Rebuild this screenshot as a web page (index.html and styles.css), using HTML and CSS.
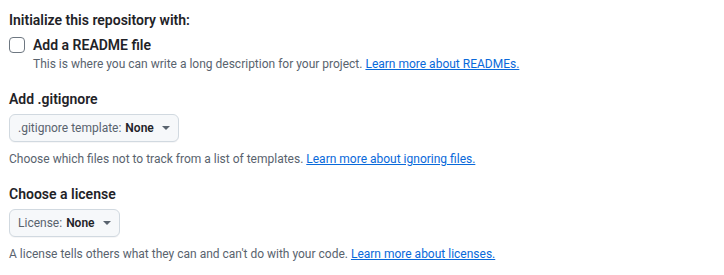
FILE: index.html
```html
<!DOCTYPE html>
<html lang="en">

<head>
    <meta charset="UTF-8">
    <meta name="viewport" content="width=device-width, initial-scale=1.0">
    <title>Initialize repository</title>
    <link rel="stylesheet" href="styles.css">
</head>

<body>
    <div class="container">
        <div class="section">
            <h3 class="section-title">Initialize this repository with:</h3>
            <div class="check-row">
                <input type="checkbox" id="addReadme" class="checkbox">
                <label for="addReadme">Add a README file</label>
            </div>
            <p class="note indented">This is where you can write a long description for your project. <a href="#">Learn more about READMEs.</a></p>
        </div>

        <div class="section">
            <h3 class="section-title">Add .gitignore</h3>
            <button type="button" class="select-btn">
                <span class="select-label">.gitignore template:</span>
                <span class="select-value">None</span>
                <span class="caret"></span>
            </button>
            <p class="note">Choose which files not to track from a list of templates. <a href="#">Learn more about ignoring files.</a></p>
        </div>

        <div class="section">
            <h3 class="section-title">Choose a license</h3>
            <button type="button" class="select-btn">
                <span class="select-label">License:</span>
                <span class="select-value">None</span>
                <span class="caret"></span>
            </button>
            <p class="note">A license tells others what they can and can't do with your code. <a href="#">Learn more about licenses.</a></p>
        </div>
    </div>
</body>

</html>
```
FILE: styles.css
```css
body {
    font-family: Roboto, "Liberation Sans", sans-serif;
    margin: 0;
    background-color: #ffffff;
    color: #1f2328;
}

.container {
    padding: 10px 9px;
}

.section + .section {
    margin-top: 16px;
}

.section-title {
    margin: 0 0 4px;
    font-size: 14px;
    line-height: 21px;
    font-weight: 600;
}

.check-row {
    display: flex;
    align-items: center;
    gap: 8px;
    height: 20px;
}

.checkbox {
    appearance: none;
    -webkit-appearance: none;
    width: 16px;
    height: 16px;
    margin: 0;
    border: 1px solid #6e7781;
    border-radius: 4px;
    background: #ffffff;
    cursor: pointer;
}

.check-row label {
    font-size: 14px;
    font-weight: 600;
    line-height: 20px;
    cursor: pointer;
}

.note {
    margin: 0;
    font-size: 12px;
    line-height: 18px;
    color: #59636e;
}

.note.indented {
    padding-left: 24px;
}

.select-btn + .note {
    margin-top: 8px;
}

.note a {
    color: #0969da;
    text-decoration: underline;
}

.select-btn {
    display: inline-flex;
    align-items: center;
    height: 28px;
    padding: 0 8px;
    font-family: inherit;
    font-size: 12px;
    color: #1f2328;
    background: #f6f8fa;
    border: 1px solid #d1d9e0;
    border-radius: 6px;
    box-shadow: 0 1px 0 rgba(31, 35, 40, 0.04);
    cursor: pointer;
}

.select-label {
    color: #59636e;
    margin-right: 4px;
}

.select-value {
    font-weight: 600;
}

.caret {
    width: 0;
    height: 0;
    margin-left: 8px;
    border-left: 4px solid transparent;
    border-right: 4px solid transparent;
    border-top: 4px solid #59636e;
}
```
